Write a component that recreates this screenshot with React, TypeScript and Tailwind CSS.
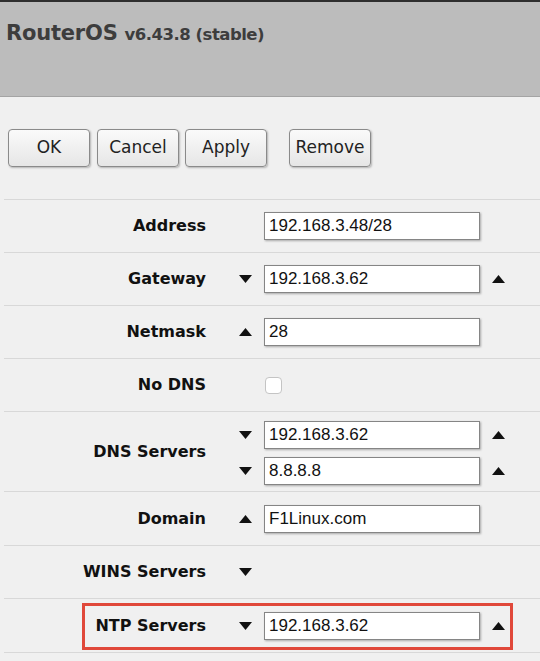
import type { ReactNode } from 'react';

const sans = "font-['DejaVu_Sans',Verdana,sans-serif]";
const field = "font-['Liberation_Sans',Arial,sans-serif]";

function Down() {
  return (
    <svg width="13" height="8" viewBox="0 0 13 8" className="block">
      <path d="M0 0 H13 L6.5 8 Z" fill="#111" />
    </svg>
  );
}

function Up() {
  return (
    <svg width="13" height="8" viewBox="0 0 13 8" className="block">
      <path d="M0 8 H13 L6.5 0 Z" fill="#111" />
    </svg>
  );
}

function Btn({ children, className = '' }: { children: ReactNode; className?: string }) {
  return (
    <button
      className={`h-[38px] w-[82px] rounded-[4px] border border-[#8a8a8a] bg-gradient-to-b from-[#fafafa] to-[#e6e6e6] text-[17px] text-[#222] shadow-[1px_1px_2px_rgba(0,0,0,0.25)] ${sans} ${className}`}
    >
      {children}
    </button>
  );
}

function Field({ value, left, right }: { value: string; left?: ReactNode; right?: ReactNode }) {
  return (
    <div className="flex items-center">
      <div className="flex w-[58px] justify-end pr-[12px]">{left}</div>
      <div
        className={`flex h-[28px] w-[216px] items-center border border-[#858585] bg-white pl-[4px] text-[17px] text-[#111] shadow-[1px_1px_2px_rgba(0,0,0,0.3)] ${field}`}
      >
        {value}
      </div>
      <div className="pl-[12px]">{right}</div>
    </div>
  );
}

function Row({ label, children, h = 'h-[53px]' }: { label: string; children?: ReactNode; h?: string }) {
  return (
    <div className={`relative ml-[4px] flex items-center border-t border-[#d8d8d8] ${h}`}>
      <div className={`w-[202px] text-right text-[16px] font-bold text-[#111] ${sans}`}>{label}</div>
      {children}
    </div>
  );
}

export default function App() {
  return (
    <div className="h-[661px] w-[540px] overflow-hidden bg-[#f0f0f0]">
      {/* title bar */}
      <div className="h-[97px] border-t-2 border-b border-t-[#2e2e2e] border-b-[#a4a4a4] bg-[#bcbcbc] pl-[6px] pt-[16px]">
        <h1 className={`flex items-baseline gap-[7px] font-bold text-[#3d3d3d] ${sans}`}>
          <span className="text-[21px] tracking-[-0.2px]">RouterOS</span>
          <span className="text-[16.5px] tracking-[-0.5px]">v6.43.8 (stable)</span>
        </h1>
      </div>

      {/* toolbar */}
      <div className="flex h-[102px] items-center pl-[8px]">
        <Btn>OK</Btn>
        <Btn className="ml-[7px]">Cancel</Btn>
        <Btn className="ml-[6px]">Apply</Btn>
        <Btn className="ml-[22px]">Remove</Btn>
      </div>

      <Row label="Address">
        <Field value="192.168.3.48/28" />
      </Row>
      <Row label="Gateway">
        <Field value="192.168.3.62" left={<Down />} right={<Up />} />
      </Row>
      <Row label="Netmask">
        <Field value="28" left={<Up />} />
      </Row>
      <Row label="No DNS">
        <div className="ml-[59px] mt-[1px] h-[17px] w-[17px] rounded-[4px] border border-[#c4c4c4] bg-white" />
      </Row>
      <Row label="DNS Servers" h="h-[80px]">
        <div className="flex flex-col gap-[8px] pt-[2px]">
          <Field value="192.168.3.62" left={<Down />} right={<Up />} />
          <Field value="8.8.8.8" left={<Down />} right={<Up />} />
        </div>
      </Row>
      <Row label="Domain" h="h-[54px]">
        <Field value="F1Linux.com" left={<Up />} />
      </Row>
      <Row label="WINS Servers">
        <div className="flex w-[58px] justify-end pr-[12px]">
          <Down />
        </div>
      </Row>
      <Row label="NTP Servers" h="h-[54px]">
        <Field value="192.168.3.62" left={<Down />} right={<Up />} />
        {/* highlight box */}
        <div className="pointer-events-none absolute left-[78px] top-[4px] h-[47px] w-[431px] border-[3px] border-[#e0483a]" />
      </Row>
      <div className="ml-[4px] border-t border-[#d8d8d8]" />
    </div>
  );
}
